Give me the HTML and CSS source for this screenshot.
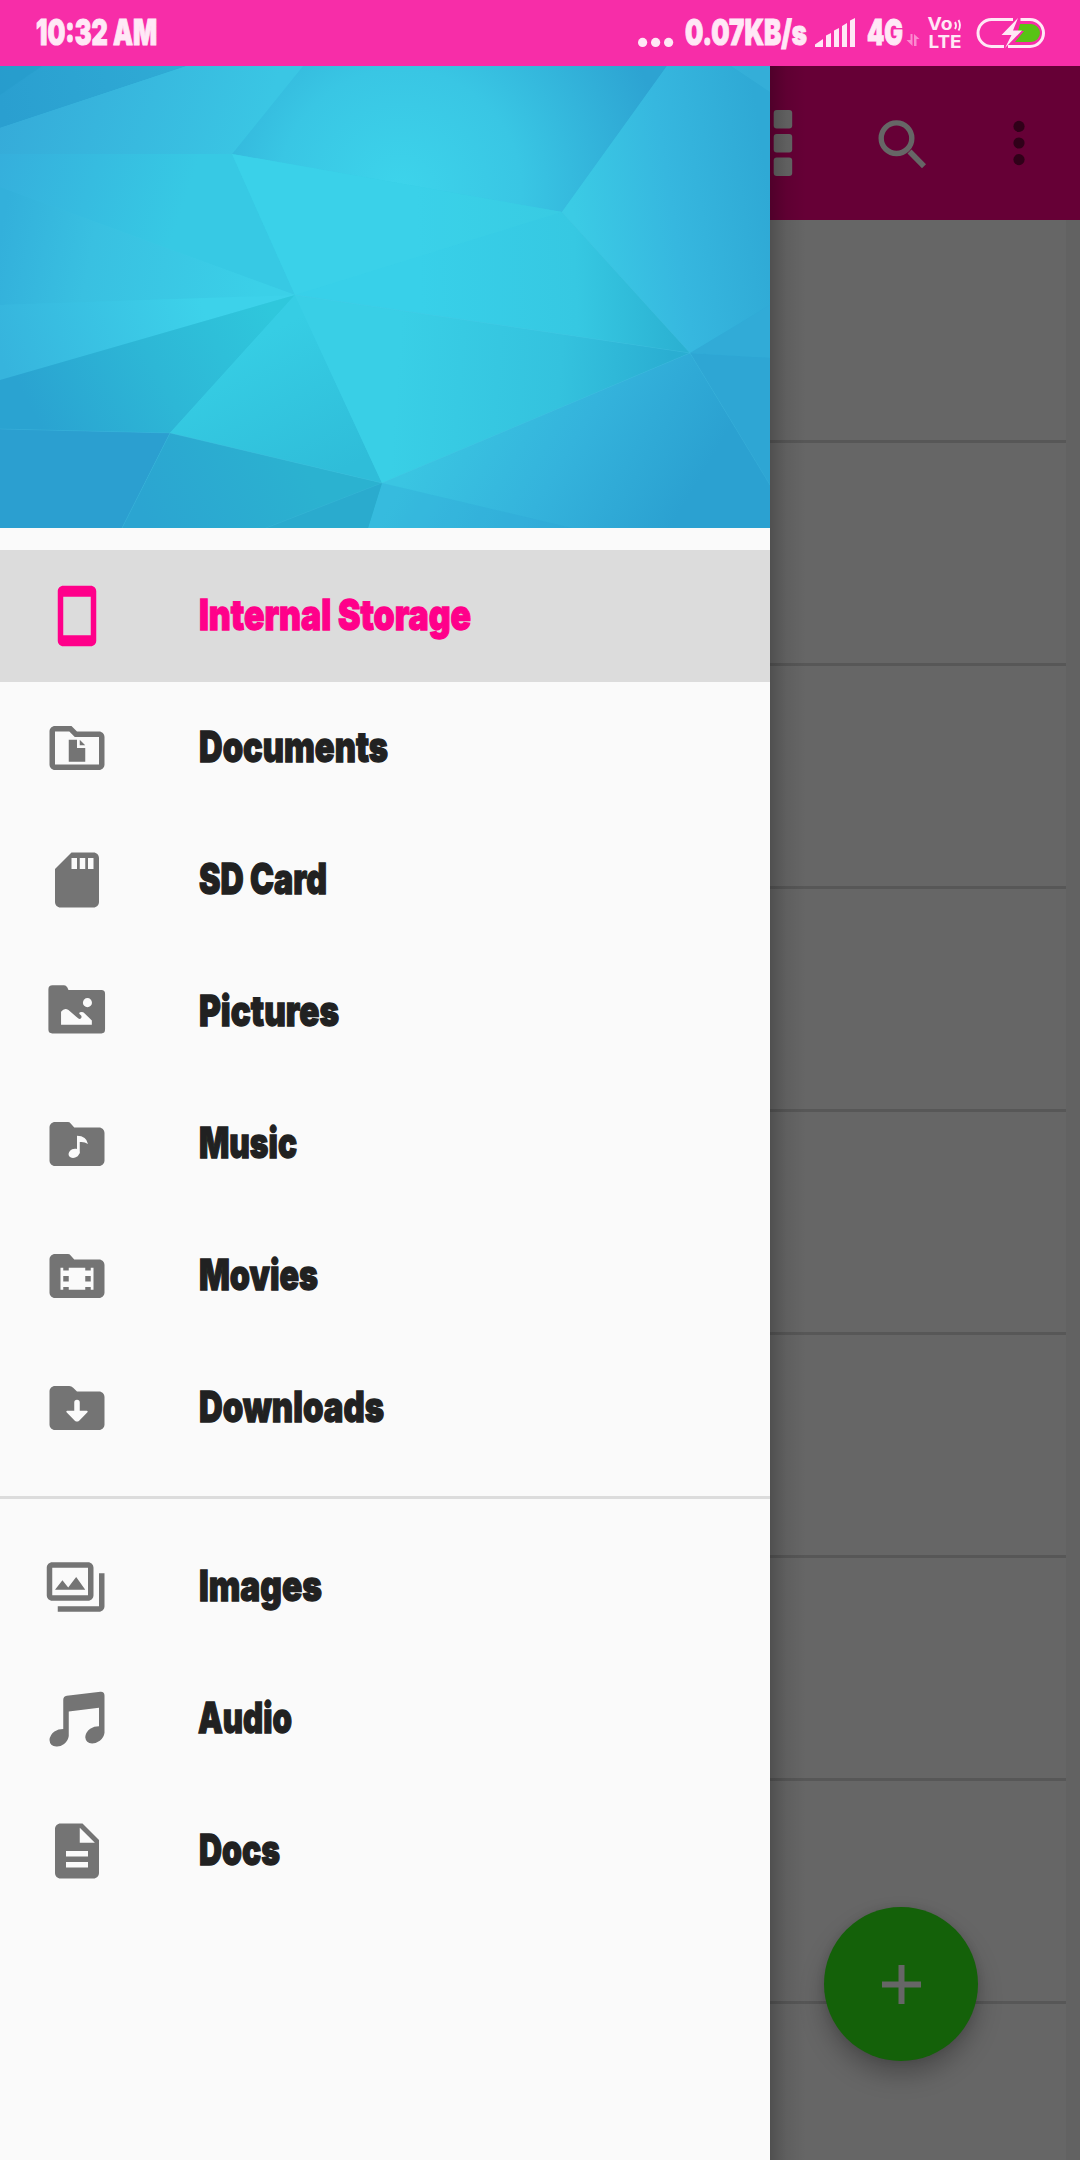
FILE: index.html
```html
<!DOCTYPE html>
<html lang="en">
<head>
<meta charset="utf-8">
<title>File manager</title>
<link rel="stylesheet" href="styles.css">
</head>
<body>
<header class="status">
  <svg class="label status-time" width="130" height="66"><text x="1" y="45" textLength="121" lengthAdjust="spacingAndGlyphs">10:32 AM</text></svg>
  <div class="status-right">
    <svg class="status-icons" width="460" height="66" viewBox="620 0 460 66">
      <g fill="#ffe8f6">
        <circle cx="642.6" cy="42.4" r="4.6"/><circle cx="655.6" cy="42.4" r="4.6"/><circle cx="668.6" cy="42.4" r="4.6"/>
        <g class="label">
          <text x="685" y="45" textLength="122" lengthAdjust="spacingAndGlyphs">0.07KB/s</text>
          <text x="867" y="45" textLength="36" lengthAdjust="spacingAndGlyphs">4G</text>
        </g>
        <path d="M815 47v-2.500l8-5.500v8zM826 47V35.500l5-2.500v14zM834 47V30.500l5-2.500v19zM842 47V26l5-3v24zM850 47V20.500l5-2.500v29z"/>
        <path opacity=".5" d="M910.500 34h2v12l-6-6h4zM914 46V34l5.500 5h-3v7z"/>
        <g class="volte">
          <text x="927.500" y="30" font-size="17" textLength="25" lengthAdjust="spacingAndGlyphs">Vo</text>
          <text x="928.500" y="47.600" font-size="18" textLength="33" lengthAdjust="spacingAndGlyphs">LTE</text>
        </g>
      </g>
      <path d="M955 22q2 3.500 0 7M958.500 20q3 5.500 0 10.500" fill="none" stroke="#ffe8f6" stroke-width="1.900"/>
      <path d="M1013 19.500h-21.500a13.500 13.500 0 0 0 0 27H1004M1020.500 19.500h9.500a13.500 13.500 0 0 1 0 27h-22" fill="none" stroke="#ffe8f6" stroke-width="3"/>
      <path d="M1020 24h11a9 9 0 0 1 0 18h-16l9-11h-6z" fill="#58c315"/>
      <path d="M1018 18l-16.500 17h10l-6.500 13 17-17.500h-9z" fill="#ffe8f6"/>
    </svg>
  </div>
</header>

<main class="screen">
  <div class="page">
    <div class="appbar">
      <svg class="ab-grid" width="20" height="66" viewBox="0 0 20 66" fill="#666"><rect x=".7" width="18.500" height="18.500" rx="3"/><rect x=".7" y="24" width="18.500" height="18.500" rx="3"/><rect x=".7" y="47.500" width="18.500" height="18.500" rx="3"/></svg>
      <svg class="ab-search" width="50" height="50" viewBox="0 0 50 50" fill="none" stroke="#666"><circle cx="18.500" cy="18.200" r="15.300" stroke-width="5.400"/><path d="M31.500 31.500l14.500 14.800" stroke-width="5.600"/></svg>
      <svg class="ab-more" width="12" height="46" viewBox="0 0 12 46" fill="#300019"><circle cx="6" cy="6.400" r="5.600"/><circle cx="6" cy="23" r="5.600"/><circle cx="6" cy="39.600" r="5.600"/></svg>
    </div>
    <div class="list">
      <div class="cell"></div><div class="cell"></div><div class="cell"></div><div class="cell"></div>
      <div class="cell"></div><div class="cell"></div><div class="cell"></div><div class="cell"></div><div class="cell last"></div>
    </div>
    <div class="fab"><svg width="39" height="39" viewBox="0 0 39 39"><path d="M19.500 0v39M0 19.500h39" stroke="#666" stroke-width="6"/></svg></div>
  </div>

  <nav class="drawer">
    <svg class="banner" width="770" height="462" viewBox="0 0 770 462">
      <defs>
        <radialGradient id="base" gradientUnits="userSpaceOnUse" cx="350" cy="205" r="470"><stop offset="0" stop-color="#38d1e9"/><stop offset=".45" stop-color="#38cae4"/><stop offset=".8" stop-color="#34b2dc"/><stop offset="1" stop-color="#2a9dcf"/></radialGradient>
        <linearGradient id="tl" gradientUnits="userSpaceOnUse" x1="0" y1="0" x2="250" y2="90"><stop offset="0" stop-color="#35a9d8"/><stop offset="1" stop-color="#3ac6e4"/></linearGradient>
        <linearGradient id="corner" gradientUnits="userSpaceOnUse" x1="0" y1="30" x2="180" y2="0"><stop offset="0" stop-color="#2a9fd0"/><stop offset="1" stop-color="#2fabd5"/></linearGradient>
        <radialGradient id="top" gradientUnits="userSpaceOnUse" cx="400" cy="125" r="270"><stop offset="0" stop-color="#3dd4eb"/><stop offset=".45" stop-color="#39c6e4"/><stop offset="1" stop-color="#2da3d2"/></radialGradient>
        <linearGradient id="tr" gradientUnits="userSpaceOnUse" x1="575" y1="160" x2="770" y2="130"><stop offset="0" stop-color="#3bcbe5"/><stop offset=".5" stop-color="#36b7df"/><stop offset="1" stop-color="#2fa9d5"/></linearGradient>
        <linearGradient id="left" gradientUnits="userSpaceOnUse" x1="0" y1="170" x2="260" y2="220"><stop offset="0" stop-color="#33b0db"/><stop offset=".35" stop-color="#39c0e1"/><stop offset="1" stop-color="#3bd0e8"/></linearGradient>
        <linearGradient id="left2" gradientUnits="userSpaceOnUse" x1="0" y1="290" x2="200" y2="230"><stop offset="0" stop-color="#36b4dd"/><stop offset="1" stop-color="#3dd2ea"/></linearGradient>
        <linearGradient id="bl" gradientUnits="userSpaceOnUse" x1="40" y1="360" x2="270" y2="240"><stop offset="0" stop-color="#2aa3d1"/><stop offset=".5" stop-color="#2db7d6"/><stop offset="1" stop-color="#2fc7dc"/></linearGradient>
        <linearGradient id="br" gradientUnits="userSpaceOnUse" x1="440" y1="350" x2="660" y2="480"><stop offset="0" stop-color="#3ac5e2"/><stop offset=".5" stop-color="#34b3dc"/><stop offset="1" stop-color="#2ba1d1"/></linearGradient>
        <linearGradient id="bot" gradientUnits="userSpaceOnUse" x1="300" y1="390" x2="150" y2="462"><stop offset="0" stop-color="#2bb2d0"/><stop offset="1" stop-color="#2ba5d1"/></linearGradient>
        <linearGradient id="mid" gradientUnits="userSpaceOnUse" x1="400" y1="270" x2="670" y2="290"><stop offset="0" stop-color="#39cfe6"/><stop offset=".6" stop-color="#34c2de"/><stop offset="1" stop-color="#2aaed2"/></linearGradient>
        <linearGradient id="midR" gradientUnits="userSpaceOnUse" x1="420" y1="230" x2="680" y2="220"><stop offset="0" stop-color="#38d0e9"/><stop offset=".6" stop-color="#36c8e2"/><stop offset="1" stop-color="#2bb1d2"/></linearGradient>
        <linearGradient id="wedge" gradientUnits="userSpaceOnUse" x1="260" y1="270" x2="330" y2="410"><stop offset="0" stop-color="#36cde4"/><stop offset="1" stop-color="#2fbdd9"/></linearGradient>
        <linearGradient id="ul" gradientUnits="userSpaceOnUse" x1="0" y1="90" x2="180" y2="150"><stop offset="0" stop-color="#35afdc"/><stop offset="1" stop-color="#37c9e4"/></linearGradient>
      </defs>
      <path fill="url(#base)" d="M0 0h770v462H0z"/>
      <path fill="url(#corner)" d="M0 0h187L0 62z"/><path fill="#2498c9" opacity=".4" d="M0 0h42L0 29z"/>
      <path fill="url(#tl)" d="M187 0h116l-71 88H0V62z"/>
      <path fill="url(#top)" d="M303 0h364L562 146 232 88z"/>
      <path fill="url(#tr)" d="M667 0h103v239l-80 48L562 146z"/><path fill="#44bfe2" opacity=".25" d="M731 0h39v26z"/>
      <path fill="url(#ul)" d="M0 88h232l63 141L0 121z"/>
      <path fill="url(#left)" d="M0 121l295 108L0 239z"/>
      <path fill="url(#left2)" d="M0 239l295-10L0 314z"/>
      <path fill="url(#bl)" d="M0 314l295-85-125 138-170-4z"/>
      <path fill="url(#wedge)" d="M295 229l87 188-212-50z"/>
      <path fill="url(#mid)" d="M295 229l395 58-308 130z"/>
      <path fill="url(#midR)" d="M232 88l330 58 128 141-395-58z"/>
      <path fill="#4fe0ef" opacity=".1" d="M232 88l330 58-267 83z"/>
      <path fill="url(#br)" d="M690 287l80 132v43H368l14-45z"/>
      <path fill="#2ba1d2" opacity=".25" d="M382 417l190 45H368z"/>
      <path fill="#31abd7" d="M690 287l80-48v53z"/><path fill="#2ea6d4" d="M690 287l80 5v127z"/>
      <path fill="#2b9fd0" d="M0 363l170 4-48 95H0z"/>
      <path fill="url(#bot)" d="M170 367l212 50-14 45H122z"/><path fill="#2aabce" d="M382 417l-14 45H266z"/>
      <path fill="none" stroke="#55c8e5" stroke-width="1" opacity=".2" d="M0 363l170 4 212 50-116 45M170 367l-48 95M562 146l128 141-395-58M382 417l308-130 80 132"/>
    </svg>

    <div class="menu">
      <div class="item active"><svg class="icon" viewBox="0 0 24 24"><path d="M17 1H7C5.900 1 5 1.900 5 3v18c0 1.100.9 2 2 2h10c1.100 0 2-.9 2-2V3c0-1.100-.9-2-2-2zm0 18H7V5h10z"/></svg><svg class="label" width="400" height="132"><text x="1" y="80" textLength="272" lengthAdjust="spacingAndGlyphs">Internal Storage</text></svg></div>
      <div class="item"><svg class="icon" viewBox="0 0 24 24"><path fill-rule="evenodd" d="M20 6h-8l-2-2H4c-1.100 0-2 .9-2 2v12c0 1.100.9 2 2 2h16c1.100 0 2-.9 2-2V8c0-1.100-.9-2-2-2zm0 12H4V6h5.200l2 2H20zM9 9h3v3h3v5H9zM13 9l2 2h-2z"/></svg><svg class="label" width="400" height="132"><text x="1" y="80" textLength="189" lengthAdjust="spacingAndGlyphs">Documents</text></svg></div>
      <div class="item"><svg class="icon" viewBox="0 0 24 24"><path d="M18 2h-8L4 8v12c0 1.100.9 2 2 2h12c1.100 0 2-.9 2-2V4c0-1.100-.9-2-2-2zm-6 6h-2V4h2v4zm3 0h-2V4h2v4zm3 0h-2V4h2v4z"/></svg><svg class="label" width="400" height="132"><text x="1" y="80" textLength="128" lengthAdjust="spacingAndGlyphs">SD Card</text></svg></div>
      <div class="item"><svg class="icon" viewBox="0 0 24 24"><path d="M3.100 2.300h4.200q.7 0 1.200.8l.4.900h12q1.300 0 1.300 1.300v13.100q0 1.400-1.300 1.400H3q-1.400 0-1.400-1.400V3.700q0-1.400 1.500-1.400z"/><g class="cut"><circle cx="15.800" cy="8.600" r="1.650"/><path d="M6.200 16.600v-4.700q1.300-1.700 2.700-.6l3.500 3q.7.600 1.100-.1.400-.6-.2-1.100-.9-.6-.2-1 1-.3 1.700.4l2.600 2.600v1.500z"/></g></svg><svg class="label" width="400" height="132"><text x="1" y="80" textLength="140" lengthAdjust="spacingAndGlyphs">Pictures</text></svg></div>
      <div class="item"><svg class="icon" viewBox="0 0 24 24"><path d="M20 6h-9L9.700 4.500Q9.300 4 8.700 4H4c-1.100 0-2 .9-2 2v12c0 1.100.9 2 2 2h16c1.100 0 2-.9 2-2V8c0-1.100-.9-2-2-2z"/><g class="cut"><ellipse cx="10.900" cy="15.400" rx="2.050" ry="1.600" transform="rotate(-25 10.900 15.400)"/><path d="M12 15V9q3.500.1 4 3-1.300-.9-3-.7v4.200z"/></g></svg><svg class="label" width="400" height="132"><text x="1" y="80" textLength="98" lengthAdjust="spacingAndGlyphs">Music</text></svg></div>
      <div class="item"><svg class="icon" viewBox="0 0 24 24"><path d="M20 6h-9L9.700 4.500Q9.300 4 8.700 4H4c-1.100 0-2 .9-2 2v12c0 1.100.9 2 2 2h16c1.100 0 2-.9 2-2V8c0-1.100-.9-2-2-2z"/><path class="cut" fill-rule="evenodd" d="M6 9h1v1h2V9h6v1h2V9h1v8h-1v-1h-2v1H9v-1H7v1H6zm1 3v2h2v-2zm8 0v2h2v-2z"/></svg><svg class="label" width="400" height="132"><text x="1" y="80" textLength="119" lengthAdjust="spacingAndGlyphs">Movies</text></svg></div>
      <div class="item"><svg class="icon" viewBox="0 0 24 24"><path d="M20 6h-8l-1.400-1.400Q10 4 9.200 4H4c-1.100 0-2 .9-2 2v12c0 1.100.9 2 2 2h16c1.100 0 2-.9 2-2V8c0-1.100-.9-2-2-2z"/><path class="cut" d="M11 10q0-1 1-1t1 1v3h2.600q.5.100.2.500l-3.100 3.200q-.7.500-1.400 0l-3.100-3.200q-.3-.4.200-.5H11z"/></svg><svg class="label" width="400" height="132"><text x="1" y="80" textLength="185" lengthAdjust="spacingAndGlyphs">Downloads</text></svg></div>
    </div>
    <div class="menu">
      <div class="item"><svg class="icon" viewBox="0 0 24 24"><path fill-rule="evenodd" d="M3 3h13c1.100 0 2 .9 2 2v10c0 1.100-.9 2-2 2H3c-1.100 0-2-.9-2-2V5c0-1.100.9-2 2-2zm0 2v10h13V5zM4 13l2.700-3.500 2.100 2.700 2.900-3.800L15 13zM20 7h2v12c0 1.100-.9 2-2 2H5v-2h15z"/></svg><svg class="label" width="400" height="132"><text x="1" y="80" textLength="123" lengthAdjust="spacingAndGlyphs">Images</text></svg></div>
      <div class="item"><svg class="icon" viewBox="0 0 24 24"><path d="M7 5q0-1.300 1.300-1.500L20.500 2.100Q22 2 22 3.500V17q-.2 1.700-1.700 2.900-1.400 1-2.800 1-2.300-.2-2.500-2.300.1-1.800 1.800-3.100 1.400-.9 3.200-.9V7.900L9 9.300v8.900q-.2 1.700-1.700 2.900-1.400 1-2.800.9Q2.100 21.800 2 19.600q.1-1.800 1.800-3.100Q5.200 15.600 7 15.600z"/></svg><svg class="label" width="400" height="132"><text x="0" y="80" textLength="94" lengthAdjust="spacingAndGlyphs">Audio</text></svg></div>
      <div class="item"><svg class="icon" viewBox="0 0 24 24"><path d="M14 2H6c-1.100 0-2 .9-2 2v16c0 1.100.9 2 2 2h12c1.100 0 2-.9 2-2V8l-6-6zm2 16H8v-2h8v2zm0-4H8v-2h8v2zm-3-5V3.500L18.500 9H13z"/></svg><svg class="label" width="400" height="132"><text x="1" y="80" textLength="81" lengthAdjust="spacingAndGlyphs">Docs</text></svg></div>
    </div>
  </nav>
</main>
</body>
</html>
```

FILE: styles.css
```css
* { box-sizing: border-box; }
body {
  margin: 0;
  width: 1080px;
  height: 2160px;
  overflow: hidden;
  display: flex;
  flex-direction: column;
  font-family: Inter, "Liberation Sans", sans-serif;
}
svg { display: block; flex: none; }
.status {
  height: 66px;
  flex: none;
  display: flex;
  justify-content: space-between;
  padding-left: 35px;
  background: #f72da8;
}
.status-time { fill: #ffe8f6; }
.label {
  font-weight: 900;
  font-size: 42px;
  overflow: visible;
  stroke: #212121;
  stroke-width: 1.3px;
}
.status .label { font-size: 35px; stroke: #ffe8f6; stroke-width: 1px; }
.volte { font-weight: 700; }
.screen { position: relative; flex: 1; }
.page { height: 100%; background: #666; display: flex; flex-direction: column; }
.appbar {
  height: 154px;
  flex: none;
  background: #660036;
  display: flex;
  align-items: center;
  justify-content: flex-end;
  padding-right: 55px;
}
.ab-search { margin-left: 85px; margin-top: 3px; }
.ab-more { margin-left: 85px; }
.list {
  flex: 1;
  overflow: hidden;
  padding-right: 14px;
  background: linear-gradient(to left, #626262 14px, #666 14px);
}
.cell { height: 223px; border-bottom: 3px solid #575757; }
.last { border: 0; }
.fab {
  position: absolute;
  left: 824px;
  top: 1841px;
  width: 154px;
  height: 154px;
  border-radius: 50%;
  background: #146109;
  box-shadow: 0 14px 24px rgba(0, 0, 0, .26), 0 0 8px rgba(0, 0, 0, .1);
  display: flex;
  align-items: center;
  justify-content: center;
}
.drawer {
  position: absolute;
  inset: 0 auto 0 0;
  width: 770px;
  background: #fafafa;
}
.drawer::after {
  content: "";
  position: absolute;
  left: 100%;
  top: 0;
  bottom: 0;
  width: 36px;
  background: linear-gradient(to right, rgba(0, 0, 0, .22), rgba(0, 0, 0, .07) 45%, transparent);
}
.menu { padding: 22px 0; }
.menu + .menu { border-top: 3px solid #dcdcdc; }
.item {
  height: 132px;
  display: flex;
  align-items: center;
  padding-left: 44px;
  gap: 88px;
  fill: #212121;
}
.icon { width: 66px; height: 66px; fill: #747474; }
.cut { fill: #fafafa; }
.active { background: #dcdcdc; fill: #ff008a; }
.active .icon { fill: #ff008a; }
.active .label { stroke: #ff008a; }
```
